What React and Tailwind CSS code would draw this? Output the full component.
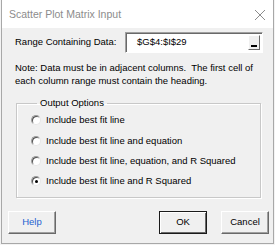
import React, { useState } from 'react';

const font = { fontFamily: '"Liberation Sans", Arial, sans-serif' };

// ── Classic radio ─────────────────────────────────────────────────────────────
function Radio({ checked, label, onClick }) {
  return (
    <div className="flex items-center h-[20.3px] cursor-default" onClick={onClick}>
      <span className="relative w-[10px] h-[10px] rounded-full border border-t-[#9a9a9a] border-l-[#9a9a9a] border-r-[#e6e6e6] border-b-[#e6e6e6] bg-white shadow-[inset_1px_1px_0_#505050] flex items-center justify-center">
        {checked && <span className="w-[3px] h-[3px] rounded-full bg-black" />}
      </span>
      <span className="ml-[5px] text-[9.5px] text-black">{label}</span>
    </div>
  );
}

// ── Raised button ─────────────────────────────────────────────────────────────
function Btn({ children, isDefault, className = '' }) {
  return (
    <button
      className={
        'h-[23px] w-[48px] text-[9.5px] bg-[#f0f0f0] border ' +
        (isDefault
          ? 'border-[#1a1a1a] shadow-[inset_1px_1px_0_#ffffff,inset_-1px_-1px_0_#696969]'
          : 'border-t-[#ffffff] border-l-[#ffffff] border-r-[#696969] border-b-[#696969] shadow-[inset_-1px_-1px_0_#a0a0a0]') +
        ' ' + className
      }
    >
      {children}
    </button>
  );
}

export default function App() {
  const options = [
    'Include best fit line',
    'Include best fit line and equation',
    'Include best fit line, equation, and R Squared',
    'Include best fit line and R Squared',
  ];
  const [sel, setSel] = useState(3);

  return (
    <div className="w-[275px] h-[245px] bg-[#f3f3f3] pl-[1px]" style={font}>
      <div className="w-[273px] h-[244px] border-x border-b border-[#a8a8a8] bg-[#f0f0f0] flex flex-col">
        {/* title bar */}
        <div className="h-[28px] bg-white flex items-center justify-between pl-[7px] pr-[6px] pt-[2px]">
          <span className="text-[10.5px] text-[#8c8c8c]">Scatter Plot Matrix Input</span>
          <svg width="12" height="12" viewBox="0 0 12 12" className="mr-[1px]">
            <path d="M1 1L11 11M11 1L1 11" stroke="#8c8c8c" strokeWidth="1" />
          </svg>
        </div>

        {/* body */}
        <div className="flex flex-col pl-[13px] pt-[4px]">
          <div className="flex items-center">
            <span className="w-[110px] text-[9.5px] text-black">Range Containing Data:</span>
            <div className="w-[138px] h-[21px] bg-white border border-t-[#a0a0a0] border-l-[#a0a0a0] border-r-[#ffffff] border-b-[#ffffff] shadow-[inset_1px_1px_0_#696969] flex items-center justify-between pl-[11px] pr-[2px]">
              <span className="text-[9.5px] text-black">$G$4:$I$29</span>
              <span className="w-[12px] h-[15px] bg-[#f0f0f0] border border-t-white border-l-white border-r-[#696969] border-b-[#696969] flex items-end justify-center pb-[2px]">
                <span className="w-[6px] h-[2px] bg-black" />
              </span>
            </div>
          </div>

          <p className="mt-[8px] text-[9.5px] leading-[13px] text-black w-[250px]">
            Note: Data must be in adjacent columns.&nbsp; The first cell of each column range must contain the heading.
          </p>

          <fieldset className="mt-[9px] ml-[1px] w-[245px] h-[102px] border border-[#c8c8c8] shadow-[1px_1px_0_#ffffff,inset_1px_1px_0_#ffffff] pl-[14px] pt-0">
            <legend className="ml-[6px] px-[3px] text-[9.5px] text-black">Output Options</legend>
            <div className="mt-0">
              {options.map((o, i) => (
                <Radio key={o} label={o} checked={sel === i} onClick={() => setSel(i)} />
              ))}
            </div>
          </fieldset>
        </div>

        {/* buttons */}
        <div className="mt-[13px] flex items-center pl-[6px]">
          <Btn className="text-[#1e62d0]">Help</Btn>
          <Btn isDefault className="ml-[103px]">OK</Btn>
          <Btn className="ml-[14px]">Cancel</Btn>
        </div>
      </div>
    </div>
  );
}
